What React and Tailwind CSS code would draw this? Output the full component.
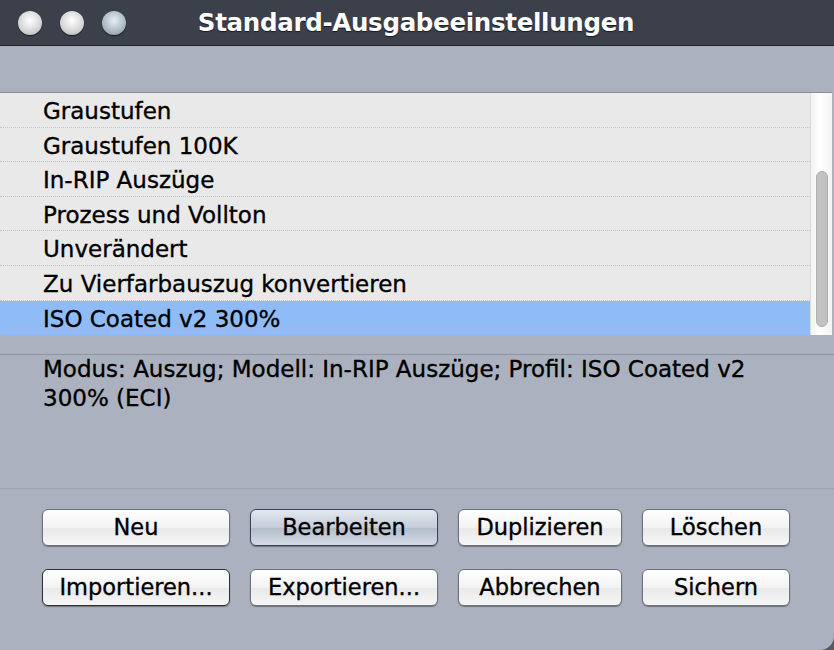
import React from "react";

const items = [
  "Graustufen",
  "Graustufen 100K",
  "In-RIP Auszüge",
  "Prozess und Vollton",
  "Unverändert",
  "Zu Vierfarbauszug konvertieren",
  "ISO Coated v2 300%",
];

function Light({ blue }) {
  return (
    <div
      className={
        "w-[24px] h-[24px] rounded-full shadow-[0_1px_1px_rgba(0,0,0,0.6)] " +
        (blue
          ? "bg-[radial-gradient(circle_at_50%_40%,#e6eef4_0%,#aebdc8_55%,#7f8e9a_100%)]"
          : "bg-[radial-gradient(circle_at_50%_40%,#ffffff_0%,#d8d8d8_55%,#a9a9a9_100%)]")
      }
    />
  );
}

function Btn({ label, w, active, dark }) {
  return (
    <div
      className={
        "h-[37px] rounded-[6px] flex items-center justify-center text-[22.5px] text-black border [-webkit-text-stroke:0.35px_#000] " +
        (active
          ? "border-[#3b3f58] bg-[linear-gradient(#e3e8ef,#c5cdd9_50%,#b3bdcb_52%,#d4dbe5)] shadow-[0_1px_1px_rgba(0,0,0,0.35)]"
          : (dark ? "border-[#2e2e36] " : "border-[#6e7078] ") +
            "bg-[linear-gradient(#ffffff,#f3f3f3_50%,#e9e9e9_52%,#f6f6f6)] shadow-[0_1px_1px_rgba(0,0,0,0.35)]")
      }
      style={{ width: w }}
    >
      {label}
    </div>
  );
}

export default function App() {
  return (
    <div
      className="w-[834px] h-[650px] bg-[#575a63] overflow-hidden"
      style={{ fontFamily: '"DejaVu Sans", "Liberation Sans", sans-serif' }}
    >
      <div className="w-full h-full bg-[#abb1be] rounded-br-[14px] flex flex-col">
        {/* title bar */}
        <div className="h-[46px] bg-[#3c404b] border-b border-[#23262d] flex items-center relative shrink-0">
          <div className="flex items-center gap-[18px] pl-[18px]">
            <Light />
            <Light />
            <Light blue />
          </div>
          <div className="absolute left-0 right-0 top-0 h-[46px] flex items-center justify-center">
            <span className="text-white font-bold text-[24.5px] tracking-[-0.3px] ml-[-2px] [text-shadow:0_1px_1px_rgba(0,0,0,0.6)]">
              Standard-Ausgabeeinstellungen
            </span>
          </div>
        </div>

        <div className="h-[46px] shrink-0" />

        {/* list */}
        <div className="h-[243px] border-t border-[#8a8f99] flex bg-[#e9e9e9] shrink-0 mr-[2px]">
          <div className="flex-1 flex flex-col">
            {items.map((t, i) => {
              const sel = i === items.length - 1;
              return (
                <div
                  key={t}
                  className={
                    "h-[34.6px] flex items-center pl-[43px] pt-[3px] text-[23px] text-black [-webkit-text-stroke:0.35px_#000] " +
                    (sel
                      ? "bg-[#8fbcf7] border-b border-dotted border-[#b9b0a0]"
                      : "border-b border-dotted border-[#c4c4c4]")
                  }
                >
                  {t}
                </div>
              );
            })}
          </div>
          <div className="w-[22px] bg-[linear-gradient(90deg,#f2f2f2,#ffffff_40%,#f4f4f4)] border-l border-[#dcdcdc] flex flex-col pt-[78px] items-center">
            <div className="w-[12px] h-[156px] rounded-full bg-[#c2c2c2] border border-[#b0b0b0]" />
          </div>
        </div>

        <div className="h-[19px] shrink-0" />

        {/* description */}
        <div className="h-[135px] border-t border-[#8f949e] border-b border-b-[#9ea3ad] shrink-0 pl-[43px] pt-[0px] text-[23px] leading-[29px] text-black [-webkit-text-stroke:0.35px_#000]">
          <div>Modus: Auszug; Modell: In-RIP Auszüge; Profil: ISO Coated v2</div>
          <div>300% (ECI)</div>
        </div>

        {/* buttons */}
        <div className="pl-[42px] pt-[20px] flex flex-col gap-[23px]">
          <div className="flex gap-[20px]">
            <Btn label="Neu" w={188} />
            <Btn label="Bearbeiten" w={188} active />
            <Btn label="Duplizieren" w={164} />
            <Btn label="Löschen" w={148} />
          </div>
          <div className="flex gap-[20px]">
            <Btn label="Importieren..." w={188} dark />
            <Btn label="Exportieren..." w={188} />
            <Btn label="Abbrechen" w={164} />
            <Btn label="Sichern" w={148} />
          </div>
        </div>
      </div>
    </div>
  );
}
